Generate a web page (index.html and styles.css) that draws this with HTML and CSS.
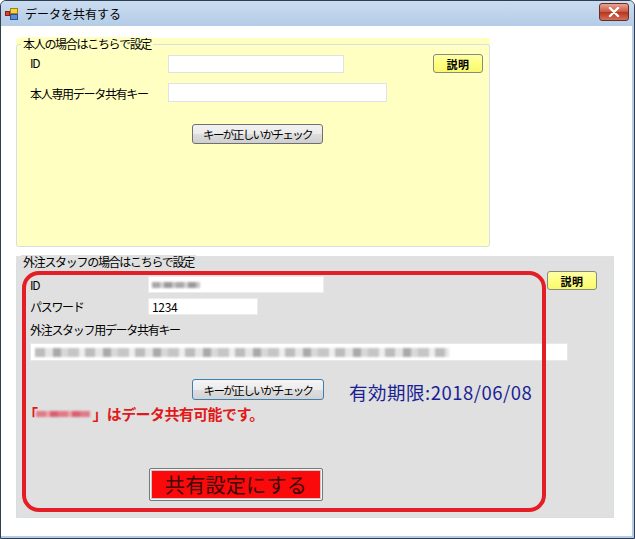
FILE: index.html
```html
<!DOCTYPE html>
<html lang="ja">
<head>
<meta charset="utf-8">
<title>データを共有する</title>
<link rel="stylesheet" href="styles.css">
</head>
<body>
<div class="window">
  <div class="titlebar">
    <svg class="appicon" width="14" height="14" viewBox="0 0 14 14">
      <rect x="0.5" y="4.5" width="4" height="4" fill="#e0402a" stroke="#8a2010" stroke-width="1"/>
      <rect x="5.5" y="1.5" width="7" height="5" fill="#f6d43c" stroke="#a08010" stroke-width="1"/>
      <rect x="5.5" y="7.5" width="7" height="5" fill="#5a8fd8" stroke="#2a4f90" stroke-width="1"/>
    </svg>
    <span class="title">データを共有する</span>
    <div class="closebtn">
      <svg width="12" height="10" viewBox="0 0 12 10">
        <path d="M2 1 L10 9 M10 1 L2 9" stroke="#fff" stroke-width="2.4" stroke-linecap="round"/>
      </svg>
    </div>
  </div>
  <div class="client">
    <div class="group group-self">
      <div class="frame frame-self">
        <span class="legend legend-self">本人の場合はこちらで設定</span>
        <div class="row row-s1">
          <span class="label label-s">ID</span>
          <div class="input input-s1"></div>
          <button class="btn btn-help btn-help-s">説明</button>
        </div>
        <div class="row row-s2">
          <span class="label label-s">本人専用データ共有キー</span>
          <div class="input input-s2"></div>
        </div>
        <div class="row row-s3">
          <button class="btn btn-check btn-check-s">キーが正しいかチェック</button>
        </div>
      </div>
    </div>
    <div class="group group-staff">
      <div class="frame frame-staff">
        <span class="legend legend-staff">外注スタッフの場合はこちらで設定</span>
        <div class="row row-t1">
          <span class="label label-t">ID</span>
          <div class="input input-t1"><span class="blur blur-id"></span></div>
          <button class="btn btn-help btn-help-t">説明</button>
        </div>
        <div class="row row-t2">
          <span class="label label-t">パスワード</span>
          <div class="input input-t2"><span class="pwtext">1234</span></div>
        </div>
        <div class="keylabel">外注スタッフ用データ共有キー</div>
        <div class="input input-key"><span class="blur blur-key"></span></div>
        <div class="row row-t3">
          <button class="btn btn-check btn-check-t">キーが正しいかチェック</button>
          <span class="expiry">有効期限:2018/06/08</span>
        </div>
        <div class="okmsg"><span class="br-open">「</span><span class="blur blur-name"></span><span class="br-close">」</span>はデータ共有可能です。</div>
        <div class="row row-t4">
          <button class="btn-share">共有設定にする</button>
        </div>
        <div class="highlight"></div>
      </div>
    </div>
  </div>
</div>
</body>
</html>
```

FILE: styles.css
```css
html, body {
  margin: 0;
  padding: 0;
  background: #ffffff;
}
body {
  font-family: "Noto Sans CJK JP", "Liberation Sans", sans-serif;
  font-size: 12px;
  color: #000;
}
.window {
  width: 633px;
  height: 537px;
  border: 1px solid #2e3e50;
  border-radius: 6px 6px 0 0;
  background: #b3cbe6;
  overflow: hidden;
}
.titlebar {
  height: 25px;
  display: flex;
  align-items: center;
  background: linear-gradient(#cadcf0, #b4cce6);
  position: relative;
}
.appicon {
  margin-left: 4px;
  margin-top: 1px;
  flex: none;
}
.title {
  margin-left: 6px;
  font-size: 12px;
  line-height: 14px;
  color: #000;
}
.closebtn {
  margin-left: auto;
  margin-right: 5px;
  margin-top: -3px;
  width: 28px;
  height: 16px;
  border: 1px solid #6b2a22;
  border-radius: 3px;
  background: linear-gradient(#e8a494, #c9553f 50%, #b8341d 51%, #d0705a);
  display: flex;
  align-items: center;
  justify-content: center;
}
.client {
  width: 631px;
  height: 510px;
  background: #ffffff;
  padding: 12px 0 0 15px;
  box-sizing: border-box;
}
.group {
  padding-top: 6px;
}
.group-self {
  width: 474px;
  height: 209px;
  background: #ffffc2;
  box-sizing: border-box;
}
.group-staff {
  margin-top: 9px;
  width: 598px;
  height: 262px;
  background: #e0e0e0;
  box-sizing: border-box;
}
.frame {
  position: relative;
  border: 1px solid #d5dfe5;
  border-radius: 3px;
  box-sizing: border-box;
  padding-left: 13px;
}
.frame-self {
  height: 203px;
  padding-top: 9px;
}
.frame-staff {
  height: 256px;
  padding-top: 10px;
}
.legend {
  position: absolute;
  left: 4px;
  top: -8px;
  padding: 0 2px;
  line-height: 14px;
  font-size: 12px;
  letter-spacing: -1.3px;
}
.legend-self { background: #ffffc2; }
.legend-staff { background: #e0e0e0; }
.row {
  display: flex;
  align-items: flex-start;
}
.label {
  flex: none;
  line-height: 14px;
  font-size: 12px;
  letter-spacing: -1.3px;
}
.label-s { width: 138px; margin-top: 2px; }
.label-t { width: 118px; }
.input {
  flex: none;
  background: #ffffff;
  border: 1px solid #dfe2e6;
  box-sizing: border-box;
  position: relative;
  overflow: hidden;
}
.input-s1 { width: 176px; height: 18px; margin-top: 1px; }
.input-s2 { width: 219px; height: 19px; }
.row-s2 { margin-top: 10px; align-items: center; }
.row-s3 { margin-top: 22px; }
.btn {
  flex: none;
  font-family: "Noto Sans CJK JP", "Liberation Sans", sans-serif;
  padding: 0;
  border: 1px solid #707070;
  border-radius: 3px;
  box-sizing: border-box;
  color: #000;
  display: flex;
  align-items: center;
  justify-content: center;
}
.btn-help {
  width: 50px;
  height: 19px;
  background: linear-gradient(#ffffa8, #ffff80 50%, #f8f870);
  font-size: 11px;
  font-weight: bold;
  letter-spacing: 0.5px;
  border-color: #8a8a7a;
}
.btn-help-s { margin-left: 89px; }
.btn-help-t { margin-left: 223px; margin-top: -2px; }
.btn-check {
  height: 20px;
  background: linear-gradient(#f2f2f2, #ebebeb 50%, #dddddd 51%, #cfcfcf);
  font-size: 11.5px;
  letter-spacing: -1.6px;
  margin-left: 162px;
}
.btn-check-s { width: 131px; }
.btn-check-t {
  width: 132px;
  height: 21px;
  border-color: #3c7fb1;
  background: linear-gradient(#f4f4f4, #ececec 50%, #dedede 51%, #d2d2d2);
}
.row-t1 .label-t { margin-top: 5px; }
.row-t1 .input-t1 { margin-top: 3px; }
.input-t1 { width: 176px; height: 17px; border-color: #ececec; }
.row-t2 { margin-top: 5px; align-items: center; }
.input-t2 { width: 110px; height: 17px; border-color: #ececec; }
.pwtext {
  position: absolute;
  left: 3px;
  top: 0;
  font-size: 12px;
  line-height: 15px;
  letter-spacing: -0.3px;
}
.keylabel {
  margin-top: 8px;
  line-height: 14px;
  font-size: 12px;
  letter-spacing: -1.3px;
}
.input-key {
  margin-top: 6px;
  width: 538px;
  height: 18px;
  border-color: #e8e8e8;
}
.blur {
  position: absolute;
  filter: blur(1.2px);
}
.blur-id {
  left: 3px;
  top: 5px;
  width: 48px;
  height: 6px;
  background: repeating-linear-gradient(90deg, #a8a8a8 0 8px, #d2d2d2 8px 12px, #9a9a9a 12px 20px, #c4c4c4 20px 24px);
}
.blur-key {
  left: 4px;
  top: 4px;
  width: 414px;
  height: 9px;
  background: repeating-linear-gradient(90deg, #bcbcbc 0 10px, #e4e4e4 10px 18px, #a9a9a9 18px 26px, #d8d8d8 26px 33px, #c6c6c6 33px 44px, #eeeeee 44px 50px);
}
.row-t3 {
  margin-top: 16px;
  align-items: center;
}
.expiry {
  margin-left: 25px;
  font-size: 18.5px;
  line-height: 20px;
  color: #1a1f94;
  letter-spacing: 0.5px;
  margin-top: 5px;
}
.okmsg {
  margin-top: 3px;
  font-size: 15px;
  line-height: 18px;
  font-weight: bold;
  color: #e01a1a;
  letter-spacing: -0.6px;
  display: flex;
  align-items: center;
}
.br-open { margin-left: -7px; }
.blur-name {
  position: static;
  display: inline-block;
  width: 54px;
  height: 6px;
  background: repeating-linear-gradient(90deg, #e07a86 0 10px, #eaa0a8 10px 14px, #d86070 14px 22px);
  margin: 0 2px 0 -1px;
}
.row-t4 { margin-top: 45px; }
.btn-share {
  margin-left: 119px;
  width: 174px;
  height: 33px;
  padding: 0;
  border: 1px solid #7a7a7a;
  border-radius: 2px;
  box-shadow: inset 0 0 0 1px #f4f4f4, inset 0 0 0 2px #c8c8c8;
  background: #fa0a0a;
  font-family: "Noto Sans CJK JP", "Liberation Sans", sans-serif;
  font-size: 20px;
  letter-spacing: 0.3px;
  color: #3a0808;
  display: flex;
  align-items: center;
  justify-content: center;
}
.highlight {
  position: absolute;
  left: 5px;
  top: 8px;
  width: 524px;
  height: 241px;
  border: 4px solid #e41e27;
  border-radius: 17px;
  box-sizing: border-box;
  pointer-events: none;
}
```
